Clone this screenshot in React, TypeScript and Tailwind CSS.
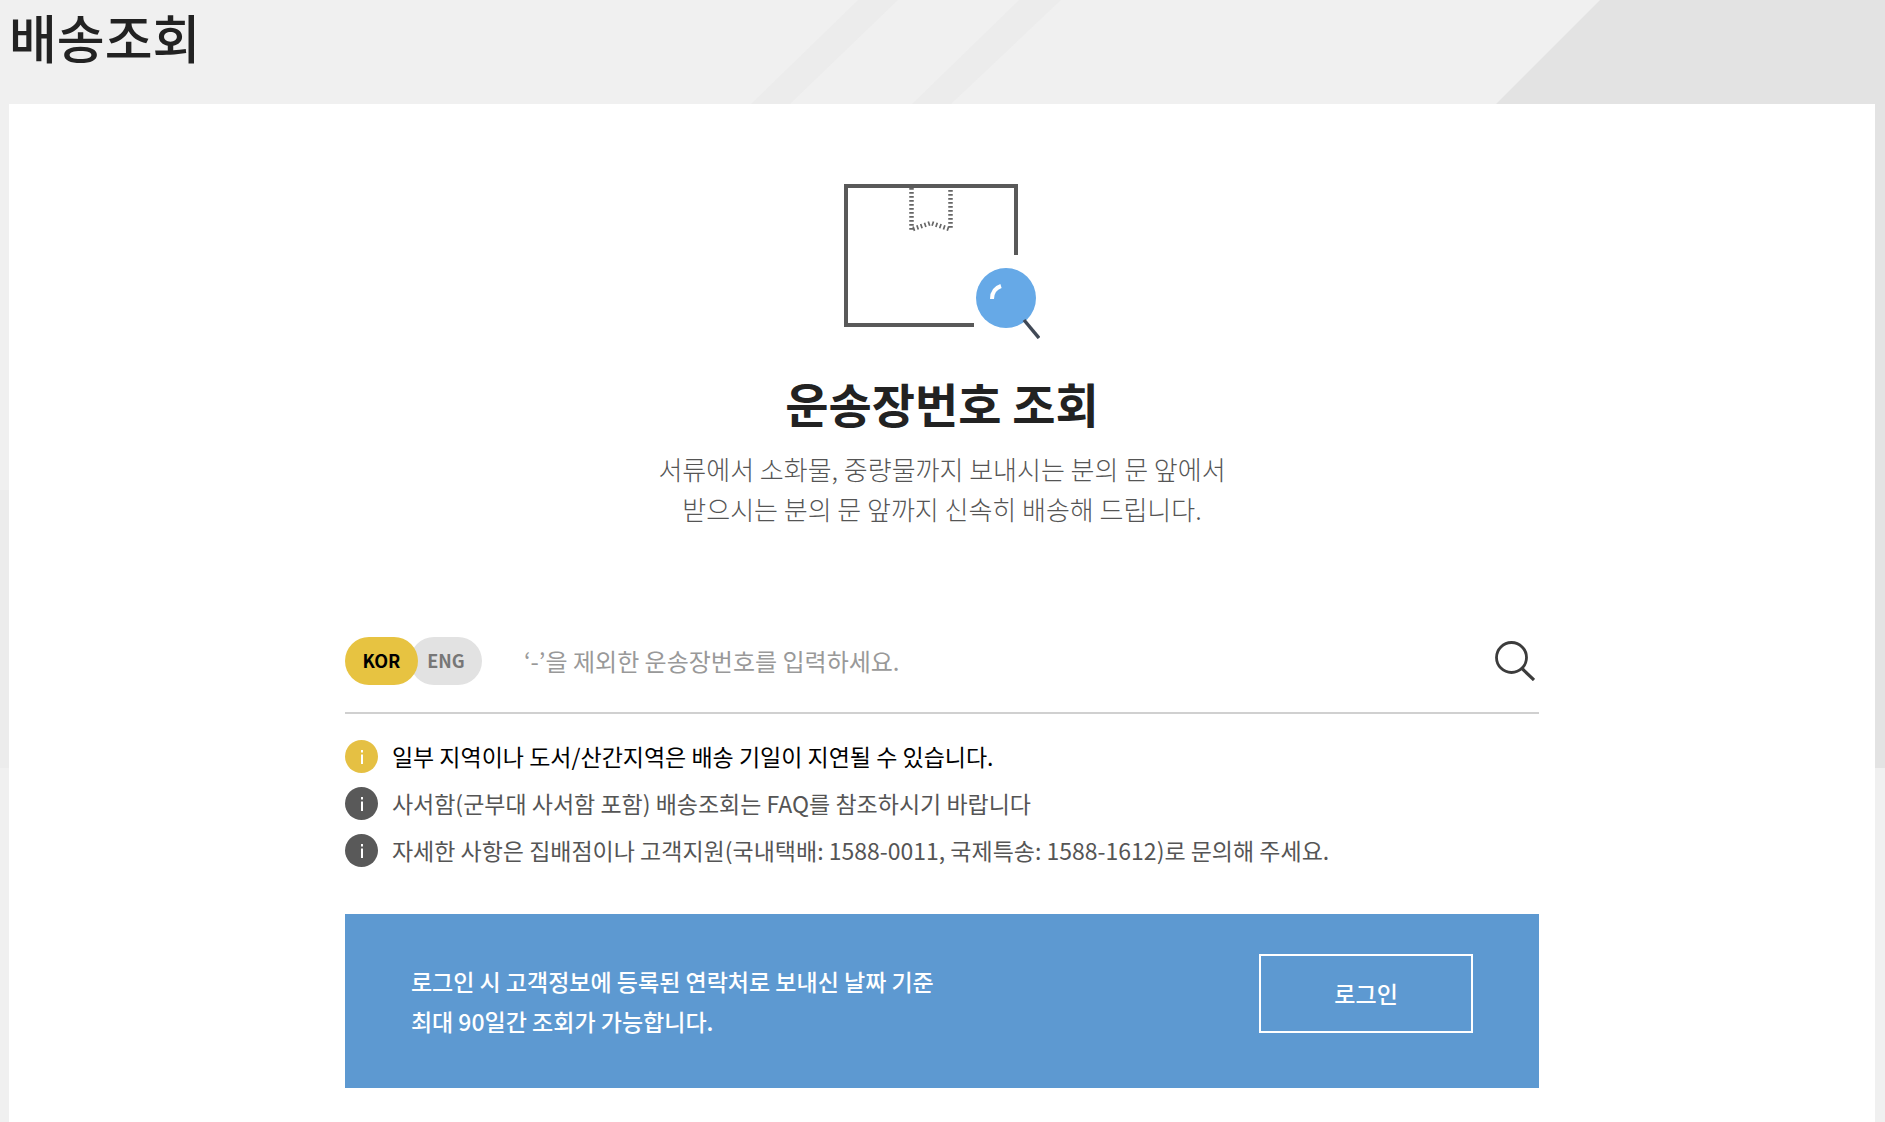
import { useState } from "react";

interface Notice {
    text: string,
    highlight?: boolean,
};

const notices: Notice[] = [
    { text: "일부 지역이나 도서/산간지역은 배송 기일이 지연될 수 있습니다.", highlight: true },
    { text: "사서함(군부대 사서함 포함) 배송조회는 FAQ를 참조하시기 바랍니다" },
    { text: "자세한 사항은 집배점이나 고객지원(국내택배: 1588-0011, 국제특송: 1588-1612)로 문의해 주세요." },
];

const Background = () => (
    <svg className="absolute left-0 top-0 -z-10 h-[768px] w-full" viewBox="0 0 1885 768" preserveAspectRatio="none" aria-hidden="true">
        <path d="M858 0H898L790 104L110 768H67L751 104Z" fill="#ececec" />
        <path d="M1019 0H1061L951 104L260 768H220L912 104Z" fill="#ececec" />
        <path d="M0 490H9V768H0Z" fill="#ececec" />
        <path d="M1600 0H1885V768H832Z" fill="#e3e3e3" />
    </svg>
);

const BoxIcon = () => (
    <svg width="196" height="155" viewBox="0 0 196 155" fill="none" aria-hidden="true">
        <path d="M172 71V2H2V141H130" stroke="#595959" strokeWidth="4" />
        <path d="M67.500 4V46" stroke="#666" strokeWidth="4.500" strokeDasharray="1.700 2.300" />
        <path d="M106.500 6V46" stroke="#666" strokeWidth="4.500" strokeDasharray="1.700 2.300" />
        <path d="M69 45L87 39L105 45" stroke="#666" strokeWidth="4.500" strokeDasharray="1.700 2.300" />
        <circle cx="162" cy="114" r="30" fill="#66a9e7" />
        <path d="M148 115C148 108 151 104 157 102" stroke="#fff" strokeWidth="4" />
        <path d="M180 136L195 154" stroke="#414956" strokeWidth="3.500" />
    </svg>
);

const SearchIcon = () => (
    <svg width="40" height="40" viewBox="0 0 40 40" fill="none" stroke="#3c3c3c" aria-hidden="true">
        <circle cx="16.500" cy="16.500" r="15" strokeWidth="2.800" />
        <path d="M27 27.500L39 39" strokeWidth="3.200" />
    </svg>
);

const InfoIcon = ({ highlight }: { highlight?: boolean }) => (
    <svg className={`${highlight ? "text-[#e5c043]" : "text-[#595959]"} shrink-0`} width="33" height="33" viewBox="0 0 33 33" aria-hidden="true">
        <circle cx="16.500" cy="16.500" r="16.500" fill="currentColor" />
        <path d="M16 10H18V12.500H16ZM16 14.500H18V24H16Z" fill="#fff" />
    </svg>
);

export default function App() {
    const [lang, setLang] = useState("KOR");
    const [number, setNumber] = useState("");

    return (
        <div className="relative isolate flex min-h-screen flex-col overflow-hidden bg-[#f0f0f0] pl-[9px] pr-[10px] font-['Noto_Sans_CJK_KR',sans-serif] text-[#555]">
            <Background />

            <header className="h-[104px]">
                <h1 className="text-[52px] font-medium leading-[74px] text-[#222]">배송조회</h1>
            </header>

            <main className="flex grow flex-col items-center bg-white pb-8 pt-20">
                <BoxIcon />
                <h2 className="mt-[30px] text-[47px] font-bold leading-[68px] text-[#222]">운송장번호 조회</h2>
                <p className="mt-3 text-center text-[26px] font-light leading-10">
                    서류에서 소화물, 중량물까지 보내시는 분의 문 앞에서<br />
                    받으시는 분의 문 앞까지 신속히 배송해 드립니다.
                </p>

                <div className="mt-[86px] w-[64%]">
                    <form className="flex h-[99px] items-center border-b-2 border-[#d0d0d0] pb-[6px]" onSubmit={(e) => e.preventDefault()}>
                        <div className="flex text-[18px] font-bold">
                            <button type="button" onClick={() => setLang("KOR")}
                                className={`${lang === "KOR" ? "z-10 bg-[#e7c341] text-black" : "bg-[#e2e2e2] text-[#777]"} h-12 w-[73px] rounded-full`}>
                                KOR
                            </button>
                            <button type="button" onClick={() => setLang("ENG")}
                                className={`${lang === "ENG" ? "z-10 bg-[#e7c341] text-black" : "bg-[#e2e2e2] text-[#777]"} -ml-2 h-12 w-[72px] rounded-full`}>
                                ENG
                            </button>
                        </div>
                        <input type="text" aria-label="운송장번호" placeholder="‘-’을 제외한 운송장번호를 입력하세요."
                            value={number} onChange={(e) => setNumber(e.target.value)}
                            className="ml-[42px] min-w-0 grow text-[24px] leading-9 outline-none placeholder:text-[#999]" />
                        <button type="submit" aria-label="조회" className="mr-1">
                            <SearchIcon />
                        </button>
                    </form>

                    <ul className="mt-[19px] flex flex-col text-[23px] leading-[47px]">
                        {notices.map((notice) => (
                            <li key={notice.text} className={`${notice.highlight ? "text-black" : ""} flex items-center gap-[14px]`}>
                                <InfoIcon highlight={notice.highlight} />
                                {notice.text}
                            </li>
                        ))}
                    </ul>

                    <section className="mt-10 flex items-start justify-between bg-[#5d99d1] px-[66px] pb-[47px] pt-10 text-[23px] text-white">
                        <p className="pt-[7px] font-medium leading-10">
                            로그인 시 고객정보에 등록된 연락처로 보내신 날짜 기준<br />
                            최대 90일간 조회가 가능합니다.
                        </p>
                        <button type="button" className="h-[79px] w-[214px] border-2 border-white font-medium">로그인</button>
                    </section>
                </div>
            </main>
        </div>
    );
}
